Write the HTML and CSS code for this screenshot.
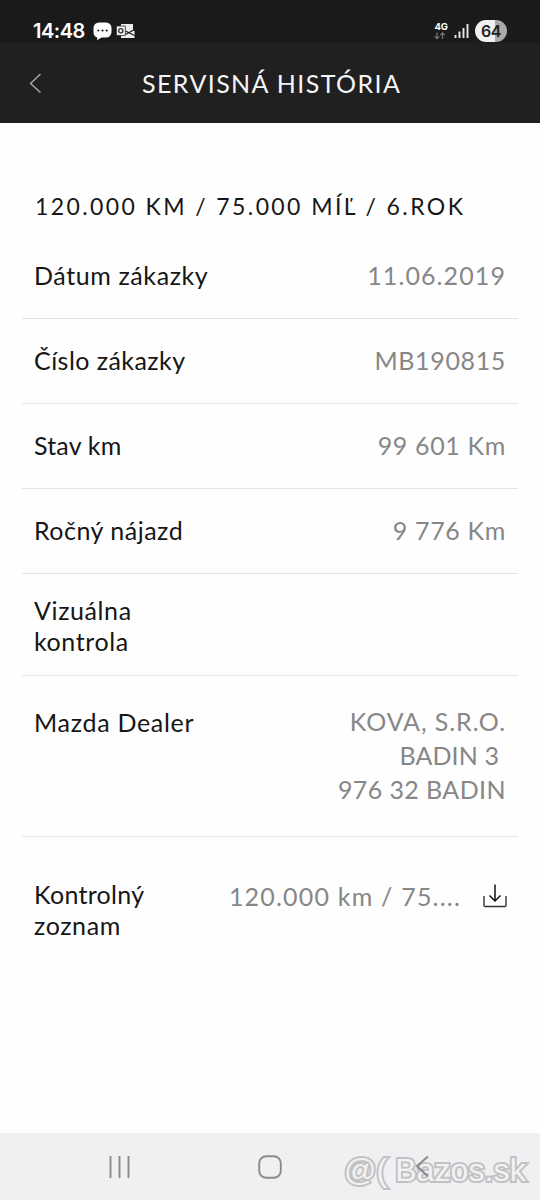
FILE: index.html
```html
<!DOCTYPE html>
<html lang="sk">
<head>
<meta charset="utf-8">
<title>Servisná história</title>
<link rel="stylesheet" href="styles.css">
</head>
<body>
<div class="phone">
  <div class="status">
    <span class="clock">14:48</span>
    <svg class="chat" width="19" height="19" viewBox="0 0 19 19"><path d="M6 .5h7a5.500 5.500 0 0 1 5.500 5.500v4a5.500 5.500 0 0 1-5.500 5.500H8.500L4 18.300 4.300 15.500A5.500 5.500 0 0 1 .5 10V6A5.500 5.500 0 0 1 6 .5z" fill="#fff"/><g fill="#1a1a1a"><circle cx="5.300" cy="8.500" r="1.100"/><circle cx="9.500" cy="8.500" r="1.100"/><circle cx="13.700" cy="8.500" r="1.100"/></g></svg>
    <svg class="mail" width="19" height="16" viewBox="0 0 19 16"><path d="M5 1h12v6l1.500 1v7H5z" fill="#eee"/><path d="M9.500 8l9 4.500M18.500 6.500l-9 5" stroke="#1a1a1a" stroke-width="1.100" fill="none"/><path d="M.4 3h9v9.500h-9z" fill="#eee" stroke="#1a1a1a" stroke-width=".7"/><circle cx="4.800" cy="7.700" r="2.100" fill="none" stroke="#333" stroke-width="1.300"/></svg>
    <div class="network"><span>4G</span><svg width="12" height="8" viewBox="0 0 12 8"><path d="M3 .5v6M.8 4.300L3 6.700l2.200-2.400M8.500 7V1M6.300 3.200L8.500.8l2.200 2.400" fill="none" stroke="#777" stroke-width="1.200"/></svg></div>
    <svg class="signal" width="15" height="16" viewBox="0 0 15 16"><path d="M1.500 12V15M5.500 8.500V15M9.500 5v10M13.500 1v14" stroke="#e8e8e8" stroke-width="1.900"/></svg>
    <span class="battery">64</span>
  </div>
  <header class="header">
    <svg class="back" width="14" height="22" viewBox="0 0 14 22"><path d="M11.500 2L1.500 11.500l10 9" fill="none" stroke="#aaa" stroke-width="1.400"/></svg>
    <h1 class="title">SERVISNÁ HISTÓRIA</h1>
  </header>
  <main class="content">
    <h2 class="heading">120.000 KM / 75.000 MÍĽ / 6.ROK</h2>
    <div class="row"><span class="label date">Dátum zákazky</span><span class="value date-value">11.06.2019</span></div>
    <div class="row"><span class="label number">Číslo zákazky</span><span class="value order-value">MB190815</span></div>
    <div class="row"><span class="label mileage">Stav km</span><span class="value km-value">99 601 Km</span></div>
    <div class="row"><span class="label annual">Ročný nájazd</span><span class="value km-value">9 776 Km</span></div>
    <div class="row visual"><span class="label">Vizuálna<br>kontrola</span></div>
    <div class="row dealer"><span class="label dealer-label">Mazda Dealer</span><span class="value address"><span class="company">KOVA, S.R.O.</span><br><span class="town">BADIN 3</span><br>976 32 BADIN</span></div>
    <div class="row checklist"><span class="label"><span class="control">Kontrolný</span><br>zoznam</span><span class="value file">120.000 km / 75....</span>
      <svg class="download" width="24" height="25" viewBox="0 0 24 25"><path d="M1 12v9.500q0 1 1 1h20q1 0 1-1V12" fill="none" stroke="#333" stroke-width="1.400"/><path d="M12 .5v16M6.500 11.500l5.500 5.500 5.500-5.500" fill="none" stroke="#111" stroke-width="1.500"/></svg></div>
  </main>
  <nav class="nav">
    <svg class="recents" width="22" height="22" viewBox="0 0 22 22"><path d="M1.500 0v22M10.500 0v22M19.500 0v22" stroke="#8b8b8d" stroke-width="1.900"/></svg>
    <svg class="home" width="24" height="24" viewBox="0 0 24 24"><rect x="1.200" y="1.200" width="21.600" height="21.600" rx="7" fill="none" stroke="#8b8b8d" stroke-width="1.900"/></svg>
    <svg class="nav-back" width="14" height="24" viewBox="0 0 14 24"><path d="M13 1.500L2 11l11 10.500" fill="none" stroke="#8b8b8d" stroke-width="2"/></svg>
    <span class="watermark"><span>@(</span><span class="site">Bazos.sk</span></span>
  </nav>
</div>
</body>
</html>
```
FILE: styles.css
```css
* { box-sizing: border-box; }
body { margin: 0; }
.phone { width: 540px; height: 1200px; display: flex; flex-direction: column; background: #fefefe; font-family: Lato, sans-serif; overflow: hidden; }
.status { height: 43px; flex: none; background: #1a1a1a; display: flex; align-items: flex-start; padding: 0 33px; color: #fff; font-family: Inter, sans-serif; }
.clock { font-size: 20px; line-height: 24px; font-weight: 600; margin-top: 19px; width: 60px; letter-spacing: -.5px; }
.chat { margin-top: 22px; }
.mail { margin: 23px 0 0 4px; }
.network { margin: 22px 6px 0 auto; display: flex; flex-direction: column; font-size: 9.500px; line-height: 10px; font-weight: 700; }
.signal { margin: 23px 6px 0 0; }
.battery { margin-top: 20px; width: 32px; height: 22px; border-radius: 11px; background: linear-gradient(90deg, #f0f0f0 64%, #aaa 64%); color: #222; text-align: center; font-size: 16px; line-height: 22px; font-weight: 600; letter-spacing: -.4px; }
.header { height: 80px; flex: none; background: #202020; display: flex; align-items: center; padding-left: 29px; }
.title { margin: 0 0 0 99px; color: #f5f5f5; font-size: 25px; line-height: 32px; font-weight: 400; letter-spacing: 1.400px; white-space: nowrap; }
.content { flex: 1; padding: 67px 22px 0; }
.heading { margin: 0 0 12px 13px; height: 32px; font-size: 23px; line-height: 32px; font-weight: 400; letter-spacing: 2.400px; color: #171717; white-space: nowrap; }
.row { height: 85px; display: flex; align-items: center; justify-content: space-between; padding: 0 12px 2px; border-bottom: 1px solid #e4e4e4; }
.label { color: #161616; font-size: 25px; line-height: 31px; letter-spacing: .6px; }
.number { letter-spacing: .45px; }
.mileage { letter-spacing: .2px; }
.annual { letter-spacing: .5px; }
.control { letter-spacing: .3px; }
.value { color: #878787; font-size: 25px; line-height: 34px; letter-spacing: 1px; text-align: right; white-space: nowrap; }
.date-value { letter-spacing: 1.100px; }
.order-value, .km-value { letter-spacing: .65px; }
.visual { height: 102px; padding-top: 4px; }
.dealer { height: 161px; }
.dealer-label { align-self: flex-start; margin-top: 31px; letter-spacing: .7px; }
.address { letter-spacing: .4px; }
.company { letter-spacing: .9px; }
.town { margin-right: 7px; letter-spacing: .1px; }
.checklist { height: 148px; border: 0; }
.file { margin: 0 0 28px auto; letter-spacing: 1.200px; }
.download { margin: 0 -1px 28px 22px; }
.nav { height: 67px; flex: none; background: #f0f0f2; display: flex; align-items: center; padding-left: 109px; position: relative; }
.home { margin-left: 127px; }
.nav-back { margin-left: 133px; position: relative; z-index: 1; }
.watermark { position: absolute; left: 344px; top: 17px; display: flex; gap: 8px; font: 400 32px/40px "Liberation Sans", sans-serif; color: #f2f2f3; -webkit-text-stroke: 4px #c2c2c4; paint-order: stroke fill; white-space: nowrap; }
.site { letter-spacing: .1px; }
```
